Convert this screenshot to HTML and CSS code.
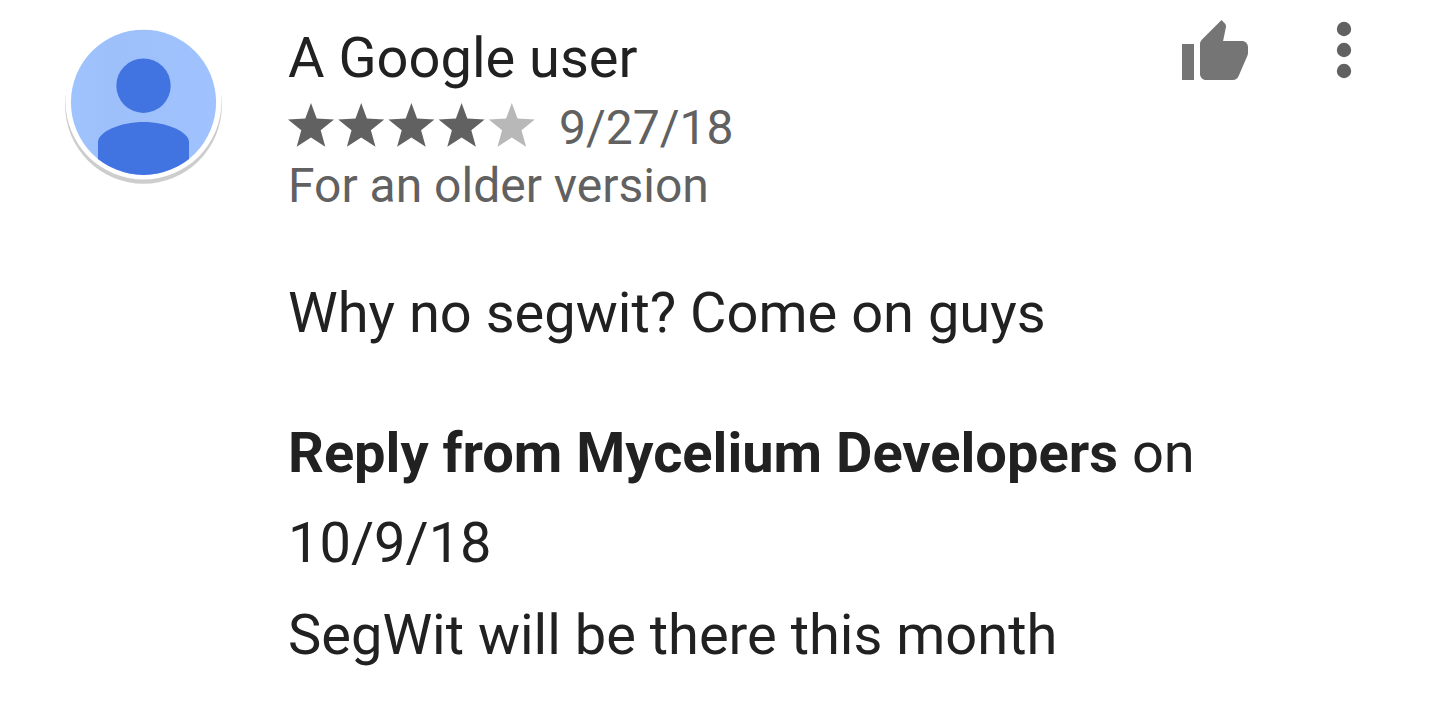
FILE: index.html
```html
<!DOCTYPE html>
<html lang="en">
<head>
    <meta charset="UTF-8">
    <meta name="viewport" content="width=device-width, initial-scale=1.0">
    <title>Review</title>
    <link rel="stylesheet" href="styles.css">
</head>
<body>

<article class="review">
    <svg class="avatar" viewBox="0 0 164 164" aria-hidden="true">
        <defs>
            <clipPath id="avatar-clip"><circle cx="80.5" cy="82.3" r="72.6"/></clipPath>
            <linearGradient id="avatar-bg" x1="0" y1="0" x2="1" y2="0">
                <stop offset="0" stop-color="#a0c4ff"/>
                <stop offset="0.3" stop-color="#9dc0fb"/>
                <stop offset="1" stop-color="#a0c3ff"/>
            </linearGradient>
        </defs>
        <circle cx="80.5" cy="85.3" r="78.4" fill="#cdcdcd"/>
        <circle cx="80.5" cy="81.500" r="78" fill="#fff"/>
        <g clip-path="url(#avatar-clip)">
            <rect width="164" height="164" fill="url(#avatar-bg)"/>
            <circle cx="80.5" cy="65.7" r="27.2" fill="#4274e1"/>
            <path d="M35 164v-42c0-10 22-20 45.500-20S126 112 126 122v42z" fill="#4274e1"/>
        </g>
    </svg>

    <div class="content">
        <header class="review-header">
            <div>
                <h1 class="author">A Google user</h1>
                <div class="meta">
                    <svg class="stars" viewBox="0 0 247 50" role="img" aria-label="Rated 4 out of 5 stars">
                        <defs>
                            <path id="star" d="M23 0l5.700 15.600L46 16.400 32.700 27.200l4.600 16.600L23 34.600 8.700 43.800l4.600-16.600L0 16.400l17.300-.8z"/>
                        </defs>
                        <use href="#star" x="0"/>
                        <use href="#star" x="50.2"/>
                        <use href="#star" x="100.4"/>
                        <use href="#star" x="150.6"/>
                        <use href="#star" x="200.8" class="star-empty"/>
                    </svg>
                    <time datetime="2018-09-27">9/27/18</time>
                </div>
                <div class="version">For an older version</div>
            </div>
            <div class="actions">
                <button class="icon-button" aria-label="Helpful">
                    <svg class="thumb" viewBox="1 1 22 20" aria-hidden="true">
                        <path d="M1 21h4V9H1v12zm22-11c0-1.100-.9-2-2-2h-6.310l.95-4.570.03-.32c0-.41-.17-.79-.44-1.060L14.170 1 7.590 7.590C7.220 7.950 7 8.450 7 9v10c0 1.100.9 2 2 2h9c.83 0 1.540-.5 1.840-1.220l3.020-7.050c.09-.23.14-.47.14-.73v-2z"/>
                    </svg>
                </button>
                <button class="icon-button" aria-label="More options">
                    <svg class="dots" viewBox="0 0 16 60" aria-hidden="true">
                        <circle cx="8" cy="9" r="7.200"/>
                        <circle cx="8" cy="30" r="7.200"/>
                        <circle cx="8" cy="51" r="7.200"/>
                    </svg>
                </button>
            </div>
        </header>

        <p class="comment">Why no segwit? Come on guys</p>

        <section class="reply">
            <p><strong>Reply from Mycelium Developers</strong> on <time datetime="2018-10-09">10/9/18</time></p>
            <p>SegWit will be there this month</p>
        </section>
    </div>
</article>

</body>
</html>
```

FILE: styles.css
```css
body {
    margin: 0;
    background-color: #fff;
    color: #212121;
    font-family: Roboto, sans-serif;
    font-size: 56px;
}
.review {
    display: flex;
    align-items: flex-start;
    gap: 61px;
    padding: 20px 88px 20px 63px;
}
.avatar {
    width: 164px;
    height: 164px;
    flex: none;
}
.content {
    flex: 1;
}
.review-header {
    display: flex;
    justify-content: space-between;
    align-items: flex-start;
}
.author {
    margin: 0;
    font-size: 56px;
    font-weight: 400;
    line-height: 76px;
}
.meta,
.version {
    color: #616161;
    font-size: 48px;
}
.meta {
    display: flex;
    align-items: center;
    gap: 24px;
    line-height: 64px;
}
.version {
    line-height: 52px;
}
.stars {
    width: 247px;
    height: 50px;
    fill: #616161;
}
.star-empty {
    fill: #b8b8b8;
}
.actions {
    display: flex;
    gap: 88px;
}
.icon-button {
    display: flex;
    padding: 0;
    border: none;
    background: none;
    cursor: pointer;
}
.thumb {
    width: 66px;
    height: 60px;
    fill: #757575;
}
.dots {
    width: 16px;
    height: 60px;
    fill: #616161;
}
.comment {
    margin: 56px 0 50px;
    line-height: 90px;
}
.reply {
    max-width: 960px;
    line-height: 90px;
}
.reply p {
    margin: 0;
}
.reply p + p {
    margin-top: 2px;
}
```
